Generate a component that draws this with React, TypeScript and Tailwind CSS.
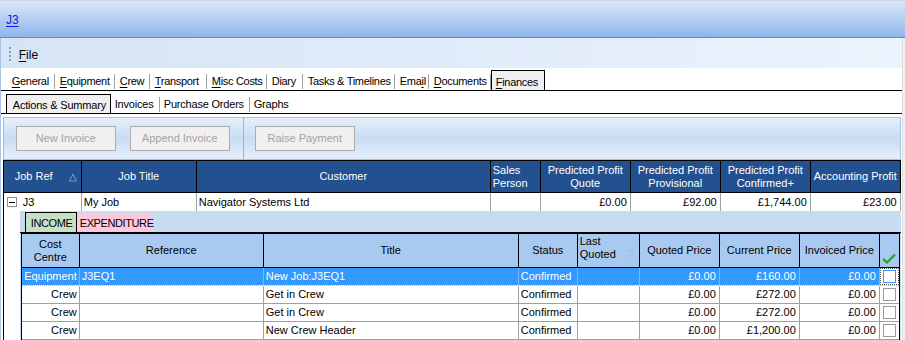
import React from 'react';

// Mnemonic label: underline one letter like a WinForms tab caption
const Mn = ({ text, at }: { text: string; at?: number }) => {
  if (at === undefined) return <>{text}</>;
  return (
    <>
      {text.slice(0, at)}
      <span className="underline underline-offset-2">{text[at]}</span>
      {text.slice(at + 1)}
    </>
  );
};

const mainTabs: { label: string; at?: number; w: number }[] = [
  { label: 'General', at: 0, w: 48 },
  { label: 'Equipment', at: 0, w: 60 },
  { label: 'Crew', at: 0, w: 35 },
  { label: 'Transport', at: 0, w: 57 },
  { label: 'Misc Costs', at: 0, w: 60 },
  { label: 'Diary', w: 36 },
  { label: 'Tasks & Timelines', w: 92 },
  { label: 'Email', at: 3, w: 34 },
  { label: 'Documents', at: 0, w: 62 },
];

const jobCols = [
  { label: 'Job Ref', w: 78 },
  { label: 'Job Title', w: 115 },
  { label: 'Customer', w: 294 },
  { label: 'Sales Person', w: 50 },
  { label: 'Predicted Profit Quote', w: 90 },
  { label: 'Predicted Profit Provisional', w: 90 },
  { label: 'Predicted Profit Confirmed+', w: 90 },
  { label: 'Accounting Profit', w: 90 },
];

const lines = [
  { centre: 'Equipment', ref: 'J3EQ1', title: 'New Job:J3EQ1', status: 'Confirmed', quoted: '£0.00', current: '£160.00', invoiced: '£0.00', sel: true },
  { centre: 'Crew', ref: '', title: 'Get in Crew', status: 'Confirmed', quoted: '£0.00', current: '£272.00', invoiced: '£0.00' },
  { centre: 'Crew', ref: '', title: 'Get in Crew', status: 'Confirmed', quoted: '£0.00', current: '£272.00', invoiced: '£0.00' },
  { centre: 'Crew', ref: '', title: 'New Crew Header', status: 'Confirmed', quoted: '£0.00', current: '£1,200.00', invoiced: '£0.00' },
];

const Btn = ({ children, className = '' }: { children: React.ReactNode; className?: string }) => (
  <div className={`w-[100px] h-[25px] flex items-center justify-center border border-[#adadad] bg-[#f0f0f0] text-[#a3a3a3] ${className}`}>
    {children}
  </div>
);

export default function App() {
  return (
    <div className="w-[905px] h-[340px] overflow-hidden bg-white font-['Liberation_Sans',sans-serif] text-[11px] text-black leading-none">
      {/* title strip */}
      <div className="h-[38px] border-t border-[#cdd6e2] border-b border-b-[#3f95ee] bg-gradient-to-b from-[#dbe8f9] to-[#8fb5e9] flex items-center pl-[6px]">
        <span className="text-[12px] text-[#1515e8] underline underline-offset-2 pt-[1px]">J3</span>
      </div>

      <div className="flex">
        <div className="w-[1px] bg-[#a9c4e6]" />
        <div className="flex-1">
          {/* menu bar */}
          <div className="h-[30px] bg-gradient-to-r from-[#d6e4f6] to-[#ebf3fd] flex items-center">
            <div className="ml-[8px] mt-[2px] flex flex-col gap-[2px]">
              {[0, 1, 2, 3].map((i) => (
                <div key={i} className="w-[2px] h-[2px] bg-[#8b9bb0]" />
              ))}
            </div>
            <span className="ml-[8px] text-[12px] pt-[3px]">
              <Mn text="File" at={0} />
            </span>
          </div>

          {/* main tabs */}
          <div className="h-[23px] border-b border-black flex items-end pl-[6px] tracking-[-0.3px]">
            {mainTabs.map((t) => (
              <div key={t.label} style={{ width: t.w }} className="h-[22px] flex items-center">
                <span className="pl-[5px] flex-1 whitespace-nowrap pt-[5px]">
                  <Mn text={t.label} at={t.at} />
                </span>
                <div className="w-[1px] h-[15px] bg-[#a0a0a0] mt-[4px]" />
              </div>
            ))}
            <div className="w-[54px] h-[20px] border border-b-0 border-black bg-[#f0f0f0] flex items-center pl-[4px] pt-[3px] whitespace-nowrap">
              <Mn text="Finances" at={0} />
            </div>
          </div>

          {/* sub tabs */}
          <div className="h-[23px] border-b border-black flex items-end pl-[5px] tracking-[-0.2px]">
            <div className="w-[105px] h-[19px] border border-b-0 border-black bg-[#f0f0f0] flex items-center pl-[6px] pt-[2px] whitespace-nowrap">
              Actions &amp; Summary
            </div>
            {[
              { l: 'Invoices', w: 49 },
              { l: 'Purchase Orders', w: 90 },
              { l: 'Graphs', w: 50 },
            ].map((t, i) => (
              <div key={t.l} style={{ width: t.w }} className="h-[19px] flex items-center">
                <span className="pl-[4px] pt-[2px] flex-1 whitespace-nowrap">{t.l}</span>
                {i < 2 && <div className="w-[1px] h-[15px] bg-[#a0a0a0] mt-[2px]" />}
              </div>
            ))}
          </div>

          {/* toolbar */}
          <div className="pt-[3px] pl-[2px] pr-[1px]">
            <div className="h-[43px] border border-[#a5bfe2] bg-gradient-to-b from-[#e6effb] via-[#c9dcf3] to-[#e6effb] flex items-center">
              <Btn className="ml-[12px]">New Invoice</Btn>
              <Btn className="ml-[14px]">Append Invoice</Btn>
              <div className="w-[1px] self-stretch bg-[#a5b2c4] ml-[13px]" />
              <Btn className="ml-[11px]">Raise Payment</Btn>
            </div>
          </div>

          {/* job grid */}
          <div className="ml-[2px] mr-[1px] border-l border-black">
            <div className="h-[33px] flex border-t border-b border-black bg-[#23508f] text-white">
              {jobCols.map((c, i) => (
                <div
                  key={c.label}
                  style={{ width: c.w }}
                  className={`h-full border-r border-black flex items-center leading-[13px] ${
                    i === 0 ? 'pl-[11px] justify-between pr-[4px]' : i === 3 ? 'pl-[2px]' : 'justify-center text-center px-[2px]'
                  }`}
                >
                  {i === 0 ? (
                    <>
                      <span>Job Ref</span>
                      <span className="text-[#b8c6dc] text-[10px]">△</span>
                    </>
                  ) : i === 3 ? (
                    <span>Sales<br />Person</span>
                  ) : (
                    <span>{c.label}</span>
                  )}
                </div>
              ))}
            </div>

            {/* job row */}
            <div className="h-[18px] flex">
              <div style={{ width: 78 }} className="border-r border-[#a0a0a0] flex items-center pl-[3px]">
                <div className="w-[10px] h-[10px] border border-[#8e8e8e] bg-white flex items-center justify-center">
                  <div className="w-[6px] h-[1px] bg-black" />
                </div>
                <span className="ml-[6px]">J3</span>
              </div>
              <div style={{ width: 115 }} className="border-r border-[#a0a0a0] flex items-center pl-[2px]">My Job</div>
              <div style={{ width: 294 }} className="border-r border-[#a0a0a0] flex items-center pl-[2px]">Navigator Systems Ltd</div>
              <div style={{ width: 50 }} className="border-r border-[#a0a0a0]" />
              {['£0.00', '£92.00', '£1,744.00', '£23.00'].map((v) => (
                <div key={v} style={{ width: 90 }} className="border-r border-[#a0a0a0] flex items-center justify-end pr-[3px]">
                  {v}
                </div>
              ))}
            </div>

            {/* detail */}
            <div className="flex">
              <div className="w-[16px]" />
              <div className="flex-1 bg-[#c8dcf1]">
                <div className="h-[22px] border-b border-black flex items-end pl-[5px] tracking-[-0.4px]">
                  <div className="w-[52px] h-[20px] border border-b-0 border-black bg-[#c5e1c5] flex items-center pl-[5px] pt-[1px]">INCOME</div>
                  <div className="w-[74px] h-[17px] mb-[1px] bg-[#ffc7da] flex items-center pl-[3px] pt-[1px]">EXPENDITURE</div>
                </div>
                <div className="ml-[1px] mr-[1px] border-l border-r border-black bg-white">
                  <div className="h-[35px] flex border-t border-b border-black bg-[#a8caf0] leading-[13px]">
                    <div className="w-[58px] border-r border-black flex items-center justify-center text-center">Cost<br />Centre</div>
                    <div className="w-[184px] border-r border-black flex items-center justify-center">Reference</div>
                    <div className="w-[255px] border-r border-black flex items-center justify-center">Title</div>
                    <div className="w-[59px] border-r border-black flex items-center justify-center">Status</div>
                    <div className="w-[62px] border-r border-black flex items-start pt-[1px] pl-[2px] overflow-hidden relative">
                      <span>Last<br />Quoted</span>
                      <span className="absolute right-[5px] top-[13px] text-[#a9b7c9] text-[10px]">▽</span>
                    </div>
                    <div className="w-[80px] border-r border-black flex items-center justify-center">Quoted Price</div>
                    <div className="w-[80px] border-r border-black flex items-center justify-center">Current Price</div>
                    <div className="w-[80px] border-r border-black flex items-center justify-center">Invoiced Price</div>
                    <div className="flex-1 flex items-end justify-center pb-[3px]">
                      <svg width="14" height="11" viewBox="0 0 14 11">
                        <path d="M1 6 L5 9.5 L13 1.5" fill="none" stroke="#2aa52a" strokeWidth="2.4" />
                      </svg>
                    </div>
                  </div>

                  {lines.map((r, i) => {
                    const cell = r.sel
                      ? 'border-r border-[#7fb6ef] bg-[#3399ff] text-white'
                      : 'border-r border-[#a0a0a0]';
                    return (
                      <div key={i} className={`h-[18px] flex border-b ${r.sel ? 'border-[#9fb9d6] border-dotted' : 'border-[#a0a0a0]'}`}>
                        <div className={`w-[58px] flex items-center justify-end pr-[2px] ${cell}`}>{r.centre}</div>
                        <div className={`w-[184px] flex items-center pl-[2px] ${cell}`}>{r.ref}</div>
                        <div className={`w-[255px] flex items-center pl-[2px] ${cell}`}>{r.title}</div>
                        <div className={`w-[59px] flex items-center pl-[2px] ${cell}`}>{r.status}</div>
                        <div className={`w-[62px] ${cell}`} />
                        <div className={`w-[80px] flex items-center justify-end pr-[3px] ${cell}`}>{r.quoted}</div>
                        <div className={`w-[80px] flex items-center justify-end pr-[3px] ${cell}`}>{r.current}</div>
                        <div className={`w-[80px] flex items-center justify-end pr-[3px] ${cell}`}>{r.invoiced}</div>
                        <div className={`flex-1 flex items-center justify-center bg-white ${r.sel ? 'outline outline-1 outline-dotted outline-[#555] -outline-offset-1' : ''}`}>
                          <div className={`w-[13px] h-[13px] border bg-white ${r.sel ? 'border-[#3399ff]' : 'border-[#9a9a9a]'}`} />
                        </div>
                      </div>
                    );
                  })}
                </div>
              </div>
            </div>
          </div>
        </div>
        <div className="w-[4px] h-[302px] bg-[#f0f0f0] border-l border-[#dcdcdc]" />
      </div>
    </div>
  );
}
